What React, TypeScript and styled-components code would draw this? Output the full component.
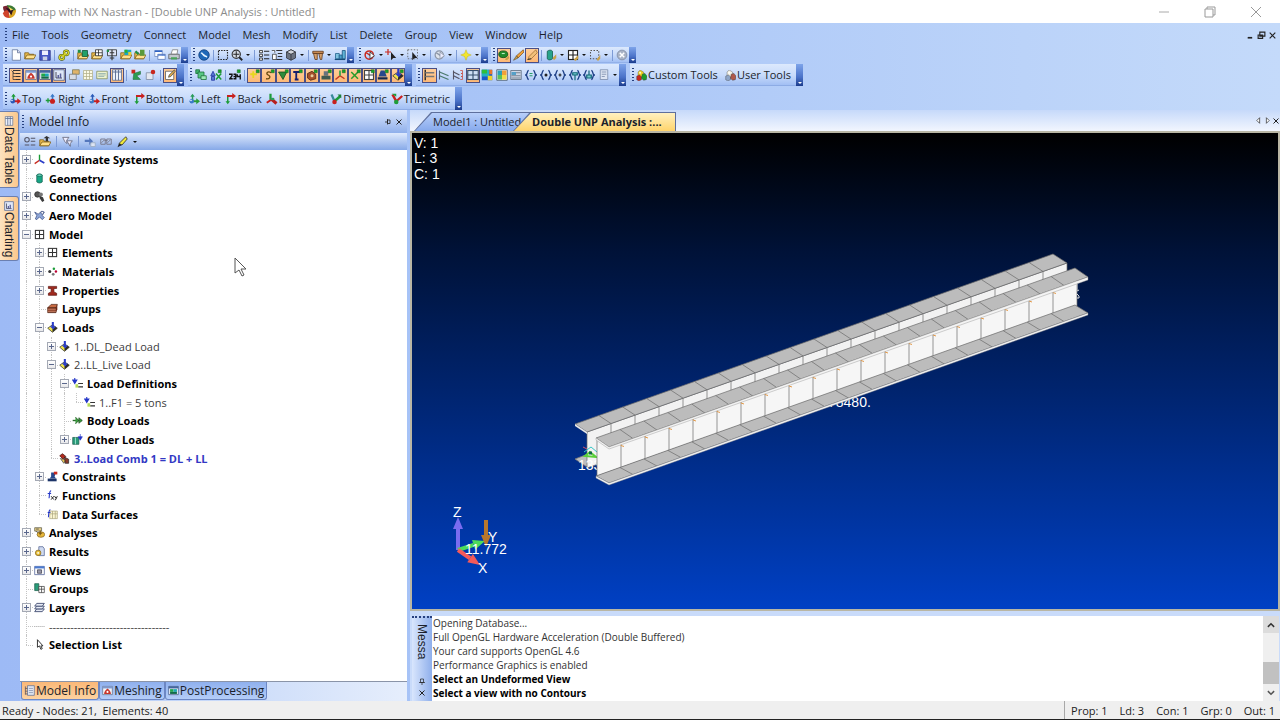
import React from 'react';
import styled, { createGlobalStyle, css } from 'styled-components';

const GlobalStyle = createGlobalStyle`
  *, *::before, *::after { box-sizing: border-box; }
  body { margin: 0; font-family: "Open Sans", "Noto Sans", sans-serif; font-size: 12px; color: #1b1f2b; }
  button { font: inherit; color: inherit; border: 0; margin: 0; padding: 0; background: none; }
  ul { list-style: none; margin: 0; padding: 0; }
  p { margin: 0; }
  svg { display: block; flex: none; }
`;

/* ---------- icon drawings, all on a 16 x 16 grid ---------- */

const grid = (c: string, f = '#fff') => (
  <>
    <rect x="2" y="2" width="12" height="12" fill={f} stroke={c} strokeWidth="1.5" />
    <path d="M8 2v12M2 8h12" stroke={c} strokeWidth="1.5" />
  </>
);
const tick = <path d="M11 1h4v4h-4z" fill="#18a52a" stroke="#0c5c16" strokeWidth=".6" />;
const folder = (
  <>
    <path d="M1 13V5h5l1 2h6v6z" fill="#e8b94c" stroke="#7a5a14" />
    <path d="M1 13l3-5h12l-3 5z" fill="#ffe08a" stroke="#7a5a14" />
  </>
);
const load = (
  <>
    <path d="M1 9l7-5 7 5-7 6z" fill="#f0e34a" stroke="#2a2a2a" strokeWidth="1" />
    <path d="M8 15l7-6-3-2-4 4z" fill="#2a2a2a" />
    <path d="M7 0h3v6h3l-4 5-5-5h3z" fill="#2a3cc8" />
  </>
);
const braces = (inner: React.ReactNode) => (
  <>
    <path d="M5 2C2 2 4 7 1 8c3 1 1 6 4 6M11 2c3 0 1 5 4 6-3 1-1 6-4 6" fill="none" stroke="#1d3f86" strokeWidth="1.8" />
    {inner}
  </>
);
const axes = (a: string, b: string, c: string) => (
  <>
    <path d="M6 10V3" stroke={a} strokeWidth="2" />
    <path d="M3 5l3-4 3 4z" fill={a} />
    <path d="M6 11h6" stroke={b} strokeWidth="2.6" />
    <path d="M11 7l5 4-5 4z" fill={b} />
    <circle cx="5" cy="11" r="3" fill={c} />
    <circle cx="4" cy="10" r="1" fill="#fff" />
  </>
);
const cubes = (a: string, b: string, c: string) => (
  <>
    <path d="M6 0l5 3v6l-5 3-3-4V3z" fill={a} stroke="#555" strokeWidth=".6" />
    <path d="M1 9l4-2 3 3v4l-4 2-3-2z" fill={b} stroke="#444" strokeWidth=".6" />
    <path d="M9 6l4-1 3 4-1 5-4 1-3-3z" fill={c} stroke="#333" strokeWidth=".6" />
    <circle cx="6" cy="4" r="1.5" fill="#fff" opacity=".8" />
  </>
);

const art: Record<string, React.ReactNode> = {
  app: (
    <>
      <path d="M1 3c4-2 7-1 8 2l-3 6C3 10 1 7 1 3z" fill="#7a2432" />
      <path d="M5 1c6 0 10 3 10 7L9 8z" fill="#3c7a35" />
      <path d="M15 6c0 5-3 9-8 9l2-7z" fill="#d9a522" />
      <path d="M1 10c1-3 4-4 6-3l1 8c-4 0-6-2-7-5z" fill="#d0442b" />
      <path d="M4 4l6 8 2-6z" fill="#2e1320" />
      <path d="M7 3l2 4 3-1z" fill="#f5d95a" />
    </>
  ),
  doc: (
    <>
      <path d="M3 1h7l4 4v10H3z" fill="#fff" stroke="#5b6f96" />
      <path d="M10 1v4h4" fill="#dde" stroke="#5b6f96" />
    </>
  ),
  folder,
  save: (
    <>
      <path d="M1 2h14v13H1z" fill="#4756c4" stroke="#283080" />
      <path d="M4 2h8v6H4z" fill="#eef" />
      <path d="M5 10h6v5H5z" fill="#c9cfe8" />
    </>
  ),
  link: (
    <g fill="none" strokeWidth="3">
      <g stroke="#4d5a08">
        <circle cx="5" cy="11" r="3" />
        <circle cx="11" cy="5" r="3" />
      </g>
      <g stroke="#d8d62a" strokeWidth="1.6">
        <circle cx="5" cy="11" r="3" />
        <circle cx="11" cy="5" r="3" />
        <path d="M5 11l6-6" />
      </g>
    </g>
  ),
  folderGeom: <>{folder}<path d="M1 1h4v4H1z" fill="#1e8f46" /><path d="M7 2h7v8H7z" fill="#21a06a" stroke="#0c4f33" /></>,
  folderGrid: <>{folder}<path d="M6 1h9v8H6z" fill="#fff" stroke="#222" /><path d="M10 1v8M6 5h9" stroke="#222" /></>,
  folderAna: <><path d="M2 1h12v8H2z" fill="#dfe6f6" stroke="#222" /><path d="M8 1v14M5 5h6M5 12h6" stroke="#333" strokeWidth="1.5" /><path d="M1 1h3v3H1z" fill="#1e8f46" /></>,
  folderRes: <>{folder}<path d="M6 1h9v7H6z" fill="#1aa4c8" /><path d="M6 1h4v4H6z" fill="#2cb22c" /><path d="M11 4h4v4h-4z" fill="#e8d02a" /></>,
  folderGo: <>{folder}<path d="M8 1h6v8H8z" fill="#5a9a3c" /><path d="M2 3l4 4" stroke="#1e8f46" strokeWidth="3" /></>,
  windows: <><path d="M1 2h10v8H1z" fill="#fff" stroke="#6b86bd" /><path d="M1 2h10v2H1zM5 7h10v2H5z" fill="#2d62c4" /><path d="M5 7h10v7H5z" fill="none" stroke="#6b86bd" /><path d="M6 9h8v4H6z" fill="#fff" /></>,
  print: <><path d="M4 7l2-6h7l-1 6z" fill="#fff" stroke="#777" /><path d="M1 7h14v6H1z" fill="#c3c8cf" stroke="#555" /><path d="M4 11h8v3H4z" fill="#4aa35a" /></>,
  globe: <><circle cx="8" cy="8" r="7" fill="#1f68b8" stroke="#0d3c7c" /><path d="M4 5l8 6M5 5c2 4 4 5 7 5" stroke="#e6f3ff" strokeWidth="2" fill="none" /></>,
  marquee: <rect x="2" y="2" width="12" height="12" fill="none" stroke="#222" strokeWidth="1.5" strokeDasharray="2 1.5" />,
  zoom: <><circle cx="7" cy="7" r="5.5" fill="#d5dae2" stroke="#333" strokeWidth="1.5" /><path d="M7 3v8M3 7h8" stroke="#222" strokeWidth="1.3" /><path d="M11 11l4 4" stroke="#222" strokeWidth="2.4" /></>,
  list: <><path d="M2 2h4v3H2zM2 7h4v3H2zM2 12h4v3H2z" fill="#eee" stroke="#222" /><path d="M8 3h7M8 8h7M8 13h7" stroke="#222" strokeWidth="1.5" /></>,
  listUp: <><path d="M7 2h8M9 6h6M9 10h6M7 14h8" stroke="#333" strokeWidth="1.5" /><path d="M2 7h5v7H2zM1 2h4v3" fill="#fff" stroke="#333" /></>,
  cube: <><path d="M8 1l6 3v8l-6 3-6-3V4z" fill="#6c737f" stroke="#2b2f36" /><path d="M8 7l6-3-6-3-6 3z" fill="#d2d5da" stroke="#2b2f36" /><path d="M8 7v8" stroke="#2b2f36" /></>,
  boxes: <><path d="M1 3h14v3H1z" fill="#c88a52" stroke="#5a3316" /><path d="M2 6h5v8H4zM9 6h5l-1 8h-2z" fill="#d6a06a" stroke="#5a3316" /></>,
  viewmove: <><path d="M2 6h5v7H2z" fill="#7fc3e0" stroke="#1e5d88" /><path d="M7 8h4v5H7z" fill="#4aa0cc" stroke="#1e5d88" /><path d="M11 2h4v11h-4z" fill="#5fb3d6" stroke="#174c78" /><path d="M1 14h14" stroke="#174c78" strokeWidth="1.5" /></>,
  pickNo: <><circle cx="7" cy="8" r="5.5" fill="none" stroke="#c8281e" strokeWidth="2" /><path d="M3 5l9 6" stroke="#c8281e" strokeWidth="2" /><path d="M8 4v9l6-4z" fill="#fff" stroke="#222" /></>,
  pickAdd: <><path d="M4 0v8M0 4h8" stroke="#c8281e" strokeWidth="1.6" /><path d="M8 4v11l3-3h4z" fill="#222" /></>,
  pickBox: <><path d="M1 1h13v12H1z" fill="none" stroke="#555" strokeDasharray="2 2" /><path d="M7 4v11l3-3h4z" fill="#222" /></>,
  nope: <><circle cx="7" cy="8" r="5.5" fill="#dfe4ec" stroke="#8a94a6" strokeWidth="1.6" /><path d="M3 5l9 6" stroke="#8a94a6" strokeWidth="2" /><path d="M8 4v9l6-4z" fill="#eef" stroke="#8a94a6" /></>,
  spark: <path d="M8 1l2 5 5 2-5 2-2 5-2-5-5-2 5-2z" fill="#f2e52e" stroke="#b8a800" strokeWidth=".5" />,
  hide: <><ellipse cx="7" cy="7" rx="6" ry="4.5" fill="#1f8b2c" stroke="#0a4712" /><path d="M5 6h4" stroke="#bfe8c4" strokeWidth="1.5" /><path d="M9 14l5-5 1 3-3 3z" fill="#caa24a" /></>,
  brush: <><path d="M15 1L6 9l2 3 8-8z" fill="#f1a13a" stroke="#6a3c0a" strokeWidth=".8" /><path d="M6 9l-4 6 6-3z" fill="#caa24a" stroke="#5a4a2a" strokeWidth=".8" /></>,
  eraser: <><path d="M13 1l2 4-8 8-4 1 1-4z" fill="#f2c07a" stroke="#86541a" strokeWidth=".8" /><path d="M2 14l5-1" stroke="#333" strokeWidth="1.5" /></>,
  cylBrush: <><path d="M3 3c2-2 6-2 7 0v10c-2 2-6 2-7 0z" fill="#27a38b" stroke="#0f5647" /><path d="M10 12l5-5v5l-3 3z" fill="#caa24a" /></>,
  gridBrush: <>{grid('#222')}<path d="M9 14l6-6v5l-4 3z" fill="#caa24a" /></>,
  boxBrush: <><path d="M2 2h11v11H2z" fill="none" stroke="#555" strokeDasharray="2 2" strokeWidth="1.4" /><path d="M10 14l5-6v5l-3 3z" fill="#caa24a" /></>,
  stop: <><circle cx="8" cy="8" r="6.5" fill="#a9b3c6" stroke="#7c88a0" /><path d="M5 5l6 6M11 5l-6 6" stroke="#fff" strokeWidth="2" /></>,
  tree: <><path d="M4 2h10M7 6h7M7 10h7M7 14h7" stroke="#333" strokeWidth="1.6" /><path d="M2 2l3 3M4 3v11M4 10h3M4 14h3M4 6h3" stroke="#333" fill="none" /></>,
  mesh: <><path d="M1 2h14v12H1z" fill="#f3f5fa" stroke="#5b6780" /><path d="M1 2h14v3H1z" fill="#7f9ad0" /><path d="M3 13c0-3 2-6 5-8 3 2 5 5 5 8z" fill="#c8372c" /><circle cx="8" cy="10" r="1.5" fill="#fff" /></>,
  post: <><path d="M1 2h14v12H1z" fill="#f3f5fa" stroke="#38507c" /><path d="M1 2h14v3H1z" fill="#44659f" /><path d="M3 6h5v4H3z" fill="#21a54a" /><path d="M8 6h5v4H8z" fill="#1aa8b4" /><path d="M3 10h10v3H3z" fill="#126b4a" /></>,
  chart: <><path d="M1 1h14v14H1z" fill="#dfe7f7" stroke="#36558e" /><path d="M4 4v8h8" stroke="#223" fill="none" /><path d="M6 8h2v4H6zM9 6h2v6H9z" fill="#5a5f9a" /></>,
  edit: <><path d="M6 1h9v6H6z" fill="#e0b46a" stroke="#775" /><path d="M2 7h9v7H2z" fill="#d7dce6" stroke="#777" /></>,
  table: <><path d="M2 2h12v12H2z" fill="#fbfae6" stroke="#b3b08a" /><path d="M2 6h12M2 10h12M6 2v12M10 2v12" stroke="#b3b08a" /></>,
  entity: <><path d="M1 3h14v10H1z" fill="#eef3cf" stroke="#7c8a58" /><path d="M3 6h10M3 8h10M3 10h8" stroke="#8aa" /></>,
  columns: <><path d="M2 1h12v14H2z" fill="#eef2fa" stroke="#56688c" /><path d="M2 4h12M6 1v14M10 1v14" stroke="#56688c" strokeWidth="1.2" /></>,
  info: <><path d="M5 1h10v14H5z" fill="#dfe5f0" stroke="#56688c" /><path d="M2 2v12M2 5h3M2 9h3M2 13h3" stroke="#445" /><path d="M7 5h6M7 8h6M7 11h6" stroke="#7a88a8" /></>,
  program: <><path d="M2 1h5v5H2z" fill="#c8281e" /><path d="M5 6l9-3v4l-5 2 5 5H4z" fill="#2b9c50" stroke="#145c2a" strokeWidth=".6" /></>,
  record: <><path d="M3 5h9v9H3z" fill="#e4e8f0" stroke="#7a869e" /><circle cx="12" cy="4" r="3" fill="#c8281e" /></>,
  note: <><path d="M2 3h11v11H2z" fill="#fff" stroke="#555" /><path d="M14 1L7 8l-1 3 3-1 6-7z" fill="#e8b04a" stroke="#444" /></>,
  layersG: <><path d="M1 1h5v5H1z" fill="#3fb56b" stroke="#166b34" /><path d="M4 4h8v8H4z" fill="#58c784" stroke="#166b34" /><path d="M8 9h7v5H8z" fill="#9de9b8" stroke="#166b34" /></>,
  excel: <><path d="M4 3l-3 6h6zM2 10h4v5H2z" fill="#5a78d8" stroke="#1b2f9c" /><path d="M8 6l7 8M15 6l-7 8" stroke="#1c9c3a" strokeWidth="2" />{tick}</>,
  num: <><path d="M0 7h4v2L1 13h4M6 7h3v3H6h3v3H6M11 7v3h4V7v7" fill="none" stroke="#111" strokeWidth="1.8" />{tick}</>,
  plus: <><path d="M7 3v9M3 7h9" stroke="#e8d81e" strokeWidth="2.4" />{tick}</>,
  curve: <><path d="M11 5C6 2 3 6 7 8s2 6-3 5" fill="none" stroke="#6a4b10" strokeWidth="1.8" />{tick}</>,
  surf: <><path d="M2 4h11l-5 10z" fill="#2e8b3a" stroke="#124a1a" />{tick}</>,
  text: <><path d="M3 4h9M7 4v10M5 14h5" stroke="#15206e" strokeWidth="2.4" />{tick}</>,
  solid: <><path d="M2 6l6-3 5 4v6l-7 2-4-3z" fill="#a4502a" stroke="#4a2410" /><circle cx="8" cy="9" r="2" fill="#e8d0a0" />{tick}</>,
  conn: <><path d="M5 3h6v6H5z" fill="#68737f" /><path d="M2 9h12v5H2z" fill="#3f5a52" />{tick}</>,
  csys: <><path d="M8 9l-6 5M8 9l6 4" fill="none" stroke="#c33a22" strokeWidth="2" /><path d="M8 2v7" stroke="#189c3a" strokeWidth="2" />{tick}</>,
  node: <><path d="M3 4l9 9M12 4l-9 9" stroke="#2c9c2c" strokeWidth="2" />{tick}</>,
  elem: <>{grid('#444')}{tick}</>,
  cons: <><path d="M5 2h5l3 8H2z" fill="#27488c" /><path d="M1 11h13v3H1z" fill="#13264e" />{tick}</>,
  loadG: <>{load}{tick}</>,
  beam: <><path d="M3 1v14" stroke="#333" strokeWidth="2" /><path d="M3 5h12M3 10h12" stroke="#777" strokeWidth="2" /></>,
  beamDef: <><path d="M2 2v12" stroke="#556" strokeWidth="1.5" /><path d="M2 4l12 5M2 9l12 5" stroke="#4b7a6c" strokeWidth="1.8" /></>,
  beamAnim: <><path d="M2 2v12" stroke="#556" strokeWidth="1.5" /><path d="M2 4l8 4M2 9l8 4" stroke="#556" strokeWidth="1.8" /><path d="M11 2h3v4h-2 2v4h-2 2v4h-3" stroke="#c8483e" fill="none" /></>,
  meshGrid: <><rect x="1" y="2" width="14" height="12" fill="#cfe0f5" stroke="#36506e" strokeWidth="1.5" /><path d="M1 8h14M8 2v12" stroke="#36506e" strokeWidth="1.5" /></>,
  contour: <><path d="M1 1h14v14H1z" fill="#1a5ac8" /><path d="M1 1h10v9H1z" fill="#25b0c0" /><path d="M1 1h7v5H1z" fill="#2fbf3a" /><path d="M9 9h6v6H9z" fill="#f0d22a" /><path d="M11 1h4v6h-4z" fill="#e8782a" /></>,
  criteria: <><path d="M1 1h14v14H1z" fill="#fff" stroke="#345" /><path d="M2 2h6v6H2z" fill="#2aa0b8" /><path d="M8 2h6v6H8z" fill="#f0a03a" /><path d="M2 8h6v6H2z" fill="#58c05a" /><path d="M8 8h6v6H8z" fill="#f0dc4a" /></>,
  beamDia: <><path d="M1 2h14v12H1z" fill="#cfd7e6" stroke="#567" /><path d="M2 4h6v4H2z" fill="#55a0c8" /><path d="M2 9h12M8 5h6M2 12h12" stroke="#567" /></>,
  br1: braces(<path d="M6 6h4M6 9h4" stroke="#2aa06a" strokeWidth="1.6" />),
  br2: braces(<circle cx="8" cy="8" r="2" fill="#222" />),
  br3: braces(<path d="M6 8h4M8 6v4" stroke="#222" strokeWidth="1.6" />),
  br4: braces(<path d="M5 5h6v3H5zM8 8v7" stroke="#167" strokeWidth="1.6" fill="#7cc" />),
  br5: braces(<path d="M5 8h6v4H5zM8 2v6" stroke="#167" strokeWidth="1.6" fill="#7cc" />),
  page: <><path d="M3 1h10v13H3z" fill="#dce4f2" stroke="#7485a6" /><path d="M5 4h6M5 7h6M5 10h4" stroke="#7485a6" /></>,
  custom: cubes('#f0d21e', '#c8281e', '#1f9c2c'),
  user: cubes('#f2f0e4', '#8fa6c8', '#b05a4a'),
  axA: axes('#1e9c3a', '#c8201e', '#2a5ab8'),
  axB: <><path d="M1 10h6M4 7v6" stroke="#1e9c3a" strokeWidth="1.8" /><path d="M10 9V3" stroke="#3a7ac8" strokeWidth="2.2" /><path d="M7 5l3-4 3 4z" fill="#3a7ac8" /><circle cx="10" cy="11" r="3.4" fill="#c8201e" /></>,
  axC: axes('#2a5ab8', '#c8201e', '#3a7ac8'),
  axD: <><path d="M5 3v10" stroke="#1e9c3a" strokeWidth="2" /><path d="M2 11l3 4 3-4z" fill="#1e9c3a" /><path d="M4 4h8" stroke="#c8201e" strokeWidth="2.6" /><path d="M11 0l5 4-5 4z" fill="#c8201e" /></>,
  axE: axes('#2a9c5a', '#2a9c3a', '#3a7ac8'),
  iso: <><path d="M6 9V1" stroke="#1e9c3a" strokeWidth="3" /><path d="M7 9l-6 4" stroke="#c8201e" strokeWidth="2.6" /><path d="M7 8l7 6" stroke="#b81e1e" strokeWidth="4" /><path d="M6 8h5" stroke="#2a9c5a" strokeWidth="3" /></>,
  dim: <><path d="M2 2l4 9" stroke="#3a8a9a" strokeWidth="3" /><path d="M6 11l8-7" stroke="#1e9c3a" strokeWidth="3.4" /><circle cx="6" cy="12" r="3" fill="#c8201e" /><path d="M10 2h5v5z" fill="#1e7c3a" /></>,
  tri: <><path d="M2 2l5 9" stroke="#c8201e" strokeWidth="3.4" /><path d="M7 11l8-7" stroke="#c8201e" strokeWidth="3" /><circle cx="7" cy="12" r="3" fill="#1e9c3a" /><path d="M1 1h6v4z" fill="#1e9c3a" /></>,
  listGray: <><circle cx="4" cy="5" r="3" fill="none" stroke="#556" strokeWidth="1.4" /><path d="M9 3h6M9 7h6M1 12h6M9 12h6" stroke="#556" strokeWidth="1.5" /></>,
  folderUp: <>{folder}<path d="M9 7V3H6l4-3 5 3h-3v4z" fill="#333" /></>,
  filter: <><path d="M1 2h9l-3 4v5L4 8z" fill="#eef" stroke="#556" /><path d="M7 7h8l-3 4v4l-2-3z" fill="#eef" stroke="#556" /></>,
  arrowBox: <><path d="M1 5h6V2l5 5-5 5V8H1z" fill="#5477bd" /><path d="M9 9h6v5H9z" fill="#dde5f4" stroke="#9ab" /></>,
  tags: <path d="M1 4h6v7H1zM9 4h6v7H9zM2 9l4-4M10 9l4-4M6 6h4" fill="none" stroke="#778" strokeWidth="1.2" />,
  marker: <><path d="M13 1l2 3-7 8-4-2z" fill="#f2ea3a" stroke="#222" /><path d="M4 10l4 2-6 3z" fill="#222" /></>,
  tCsys: <><path d="M8 1v8" stroke="#1a9c34" strokeWidth="2" /><path d="M8 9l-7 5" stroke="#c82a1e" strokeWidth="2" /><path d="M8 9l7 4" stroke="#2a3cc8" strokeWidth="2.4" /></>,
  tGeom: <><path d="M4 3c2-2 6-2 8 0v10c-2 2-6 2-8 0z" fill="#17a585" stroke="#0e5a4a" /><ellipse cx="8" cy="3.2" rx="4" ry="1.6" fill="#74e2c8" stroke="#0e5a4a" /></>,
  tConn: <><circle cx="5" cy="5" r="4" fill="#555" stroke="#222" /><circle cx="10" cy="5" r="3" fill="#777" /><path d="M8 7l5 2 2 5-3 2-4-6z" fill="#3a3a3a" /></>,
  tAero: <><path d="M1 3l5 3 5-4 4 1-3 5 3 3-3 3-4-4-4 4-2-1 2-5z" fill="#8ea6d8" stroke="#34477c" /><circle cx="12" cy="4" r="2" fill="#fff" stroke="#34477c" /></>,
  tGrid: grid('#333'),
  tMat: <><circle cx="4" cy="8" r="2.2" fill="#333" /><circle cx="10" cy="4" r="1.8" fill="#1c9c3a" /><circle cx="13" cy="8" r="1.8" fill="#b03" /><circle cx="9" cy="12" r="2" fill="#777" /></>,
  tProp: <path d="M2 2h12v3h-4v5l4 2v3H2v-3l4-2V5H2z" fill="#a02a1e" stroke="#5a120c" />,
  tLayup: <><path d="M1 7l5-5h9l-2 5z" fill="#c86a42" stroke="#4a1c0c" /><path d="M1 7h12v7H1z" fill="#8a3a22" stroke="#4a1c0c" /><path d="M1 9h12M1 12h12" stroke="#e8a88a" /><path d="M13 7l2-5v7l-2 5z" fill="#6a2412" /></>,
  load,
  tDef: <><path d="M4 0v7M1 3l3 5 3-5z" stroke="#2436c8" strokeWidth="1.6" fill="#2436c8" /><path d="M9 8h7M9 13h7" stroke="#333" strokeWidth="1.8" /><path d="M5 9h4v5H5z" fill="#b8dc5a" /></>,
  tBody: <><path d="M1 8h13" stroke="#2a6a2c" strokeWidth="2" /><path d="M5 3l5 5-5 5M10 4l5 4-5 4z" fill="#3c9c3e" stroke="#1c4a1e" /></>,
  tOther: <><path d="M1 5h9v10H1z" fill="#2a9c7a" stroke="#1c5a4a" /><path d="M5 5v10" stroke="#cfe" /><path d="M12 0v6M9 4l3 5 3-5z" stroke="#2436c8" fill="#2436c8" /></>,
  tComb: <><path d="M1 4l4-3 5 4-4 4z" fill="#b02a1e" stroke="#3a0c08" /><path d="M2 8l5 7 3-5z" fill="#e8c85a" stroke="#444" /><path d="M8 6l6 3v6H9z" fill="#8a3a2a" stroke="#222" /></>,
  tCons: <><path d="M6 2h6v3l-1 3 2 3H4l2-3z" fill="#27488c" /><path d="M1 11h13v4H1z" fill="#1c3468" /><path d="M10 1h5v4h-5z" fill="#c82a1e" /></>,
  tFun: <><path d="M6 1C3 1 4 5 3 12M1 5h5" stroke="#2436c8" fill="none" strokeWidth="1.6" /><path d="M6 9l4 5M10 9l-4 5M11 9l2 3M15 9l-3 6" stroke="#222" strokeWidth="1.4" /></>,
  tData: <><path d="M4 3h11v11H4z" fill="#fbf6d2" stroke="#a8a27a" /><path d="M4 7h11M8 3v11M12 3v11" stroke="#a8a27a" /><path d="M5 1C2 1 3 5 2 12M1 5h4" stroke="#2436c8" fill="none" strokeWidth="1.5" /></>,
  tAna: <><path d="M1 1h10v5H1z" fill="#e8d088" stroke="#554" /><path d="M3 3h4M3 6l3 3" stroke="#333" /><ellipse cx="10" cy="11" rx="5.5" ry="4" fill="#e8b83a" stroke="#7a5a14" /><path d="M9 5v7M7 9h5" stroke="#6a4a14" strokeWidth="1.4" /></>,
  tRes: <><path d="M7 1h6l2 3v10H7z" fill="#cfdaf0" stroke="#46598a" /><circle cx="6" cy="10" r="4" fill="#e8c03a" stroke="#7a5a14" /><circle cx="6" cy="10" r="1.3" fill="#fff" /></>,
  tView: <><path d="M1 2h14v12H1z" fill="#fff" stroke="#3a4f8a" /><path d="M1 2h14v3H1z" fill="#4a7ad0" /><path d="M5 7h6v5H5z" fill="#99a" stroke="#334" /></>,
  tGroup: <><path d="M1 1h6v10H1z" fill="#2a9c7a" stroke="#145a44" /><path d="M7 5h8v9H7z" fill="#fff" stroke="#333" /><path d="M11 5v9M7 9h8" stroke="#333" /></>,
  tLayer: <g fill="#e8ecf6" stroke="#333f66" strokeWidth="1.2"><path d="M1 14l3-4h11l-3 4z" /><path d="M1 10l3-4h11l-3 4z" /><path d="M1 6l3-4h11l-3 4z" /></g>,
  tCursor: <path d="M5 1v11l3-2 2 5 2-1-2-4h3z" fill="#fff" stroke="#222" strokeWidth="1.3" />,
  tDash: <path d="M0 8h16" stroke="#999" strokeDasharray="2 1" />,
  pin: <path d="M4 4h7v5H4zM2 9h11M8 9v5" fill="none" stroke="#222" strokeWidth="1.6" transform="rotate(90 8 8)" />,
  pinDown: <path d="M5 2h6v7H5zM2 9h12M8 9v5" fill="none" stroke="#222" strokeWidth="1.4" />,
  close: <path d="M3 3l10 10M13 3L3 13" stroke="#222" strokeWidth="2" />,
  mdiMin: <path d="M3 12h8" stroke="#222" strokeWidth="3" />,
  mdiMax: <path d="M5 2h9v7H5zM2 7h8v6H2z" fill="none" stroke="#222" strokeWidth="2" />,
  triL: <path d="M10 3v10L5 8z" fill="#fff" stroke="#222" strokeWidth="1.2" />,
  triR: <path d="M6 3v10l5-5z" fill="#fff" stroke="#222" strokeWidth="1.2" />,
  winMin: <path d="M3 8h10" stroke="#aaa" />,
  winMax: <path d="M3 5h8v8H3zM5 5V3h8v8h-2" fill="none" stroke="#999" />,
  winClose: <path d="M3 3l10 10M13 3L3 13" stroke="#999" />,
  up: <path d="M3 11l5-5 5 5" fill="none" stroke="#333" strokeWidth="2.4" />,
  down: <path d="M3 5l5 5 5-5" fill="none" stroke="#555" strokeWidth="2.4" />,
};

const Icon = ({ name, size = 13 }: { name: string; size?: number }) => (
  <svg width={size} height={size} viewBox="0 0 16 16" aria-hidden="true">{art[name]}</svg>
);

/* ---------- frame ---------- */

const Frame = styled.div`
  min-height: 100vh;
  display: flex;
  flex-direction: column;
  background: linear-gradient(90deg, #9dbaf5 0%, #a9c5f7 40%, #c4dafa 100%);
`;
const TitleBar = styled.header`
  height: 23px;
  display: flex;
  align-items: center;
  gap: 4px;
  padding-left: 2px;
  background: #fff;
  color: #8b8b8b;
`;
const Title = styled.h1`
  flex: 1;
  margin: 0;
  font-size: 11px;
  font-weight: 400;
`;
const WindowButtons = styled.div`
  display: flex;
  gap: 30px;
  padding-right: 16px;
`;
const PlainButton = styled.button`
  display: flex;
  align-items: center;
  justify-content: center;
`;
const MenuBar = styled.nav`
  height: 24px;
  display: flex;
  align-items: center;
  gap: 2px;
  padding: 0 3px;
`;
const MenuItems = styled.div`
  flex: 1;
  display: flex;
  gap: 12px;
  padding-left: 1px;
`;
const MenuItem = styled.button`
  font-size: 11px;
  line-height: 16px;
`;
const Grip = styled.span`
  flex: none;
  width: 2px;
  height: 14px;
  margin: 0 2px;
  background: repeating-linear-gradient(180deg, #27407e 0 1px, transparent 1px 3px);
`;

/* ---------- tool bars ---------- */

const Bands = styled.div`
  display: flex;
  flex-direction: column;
  gap: 1px;
  height: 63px;
`;
const Band = styled.div<{ $h: number; $gap: number }>`
  height: ${p => p.$h}px;
  display: flex;
  gap: ${p => p.$gap}px;
  padding-left: 3px;
`;
const Bar = styled.div<{ $w?: number }>`
  ${p => p.$w && css`width: ${p.$w}px;`}
  display: flex;
  align-items: center;
  background: linear-gradient(180deg, #dce9fd 0%, #c8dbfb 50%, #a3c0f4 94%, #809fdc 100%);
`;
const Cells = styled.div`
  flex: 1;
  align-self: stretch;
  display: flex;
  align-items: center;
`;
const Tool = styled.button<{ $on?: boolean }>`
  flex: 1;
  height: 15px;
  min-width: 0;
  display: flex;
  align-items: center;
  justify-content: center;
  ${p => p.$on && css`
    background: linear-gradient(180deg, #ffcf9a, #fdb774);
    box-shadow: inset 0 0 0 1px #4a4f86;
  `}
`;
const TextTool = styled.button`
  display: flex;
  align-items: center;
  gap: 1px;
  font-size: 11px;
  line-height: 16px;
  white-space: nowrap;
`;
const TextCells = styled(Cells)`
  justify-content: space-between;
  padding-right: 5px;
`;
const Drop = styled.span`
  flex: none;
  width: 8px;
  display: flex;
  justify-content: center;
  &::after { content: ""; border: 2px solid transparent; border-top-color: #111; margin-top: 2px; }
`;
const Split = styled.span`
  flex: none;
  width: 1px;
  height: 11px;
  margin: 0 2px;
  background: #7d9bd6;
`;
const Overflow = styled.button`
  flex: none;
  align-self: stretch;
  width: 7px;
  display: flex;
  align-items: flex-end;
  justify-content: center;
  padding-bottom: 2px;
  background: linear-gradient(180deg, #7ea4ea, #4a72c8 60%, #1c3c8c);
  &::after { content: ""; border: 2px solid transparent; border-top-color: #fff; border-bottom: 0; }
`;

type Group = { w: number; label: string; cells: string };
/* cell codes: "*" marks a pressed tool, "v" a drop-down arrow, "|" a divider */
const fileBand: Group[] = [
  { w: 185, label: 'File', cells: 'doc folder save | link | folderGeom folderGrid folderAna folderRes folderGo | windows print' },
  { w: 163, label: 'View', cells: 'globe | marquee zoom v | list listUp cube v | boxes v viewmove' },
  { w: 131, label: 'Select', cells: 'pickNo v pickAdd v pickBox v | nope v | spark v' },
  { w: 145, label: 'Show', cells: '*hide brush *eraser | cylBrush v gridBrush v boxBrush v | stop' },
];
const paneBand: Group[] = [
  { w: 181, label: 'Panes', cells: '*tree *mesh *post *chart edit table entity *columns | program record | *note' },
  { w: 224, label: 'Entities', cells: 'layersG excel | num | *plus *curve *surf *text *solid *conn *csys *node *elem *cons *loadG' },
  { w: 210, label: 'Post', cells: '*beam beamDef beamAnim *meshGrid contour criteria beamDia br1 br2 br3 br4 br5 page v' },
];
const viewTools: [string, string][] = [
  ['axA', 'Top'], ['axB', 'Right'], ['axC', 'Front'], ['axD', 'Bottom'], ['axE', 'Left'],
  ['axD', 'Back'], ['iso', 'Isometric'], ['dim', 'Dimetric'], ['tri', 'Trimetric'],
];

const ToolGroup = ({ w, label, cells }: Group) => (
  <Bar $w={w} role="toolbar" aria-label={label}>
    <Grip />
    <Cells>
      {cells.split(' ').map((c, i) => {
        if (c === '|') return <Split key={i} />;
        if (c === 'v') return <Drop key={i} />;
        const on = c[0] === '*';
        const name = on ? c.slice(1) : c;
        return <Tool key={i} $on={on} aria-label={name}><Icon name={name} size={12} /></Tool>;
      })}
    </Cells>
    <Overflow aria-label="More" />
  </Bar>
);

/* ---------- work area ---------- */

const Work = styled.div`
  flex: 1;
  display: flex;
  min-height: 0;
`;
const Rail = styled.div`
  width: 20px;
  display: flex;
  flex-direction: column;
  gap: 8px;
  padding-top: 1px;
`;
const RailTab = styled.button<{ $h: number }>`
  width: 19px;
  height: ${p => p.$h}px;
  display: flex;
  flex-direction: column;
  align-items: center;
  gap: 1px;
  padding-top: 4px;
  border: 1px solid #6b7fb0;
  border-left: 0;
  border-radius: 0 3px 3px 0;
  background: linear-gradient(90deg, #fde3bf, #fbc78c);
  font-family: "Liberation Sans", Arial, sans-serif;
  font-size: 12px;
  line-height: 16px;
`;
const Vertical = styled.span`
  writing-mode: vertical-rl;
`;
const Panel = styled.section`
  width: 387px;
  display: flex;
  flex-direction: column;
  background: #fff;
`;
const PanelHead = styled.div`
  height: 23px;
  display: flex;
  align-items: center;
  gap: 3px;
  padding-right: 4px;
  background: linear-gradient(180deg, #dbe7fd, #8fafeb);
`;
const PanelTitle = styled.h2`
  flex: 1;
  margin: 0;
  font-size: 12px;
  font-weight: 400;
`;
const PanelTools = styled.div`
  height: 17px;
  display: flex;
  align-items: center;
  gap: 3px;
  padding: 0 4px;
  background: linear-gradient(180deg, #dfeafd, #86a9e8);
`;
const ToolIcons = styled.div`
  display: flex;
  align-items: center;
  gap: 4px;
`;
const Tree = styled.ul`
  flex: none;
  height: 504px;
  display: flex;
  flex-direction: column;
`;
const TreeRow = styled.li`
  flex: 1;
  min-height: 0;
  display: flex;
  align-items: stretch;
`;
const Guide = styled.span<{ $w: number; $line: 'none' | 'full' | 'half'; $arm?: boolean }>`
  position: relative;
  flex: none;
  width: ${p => p.$w}px;
  display: flex;
  align-items: center;
  justify-content: center;
  &::before {
    content: "";
    position: absolute;
    left: 6px;
    top: 0;
    height: ${p => (p.$line === 'half' ? '50%' : '100%')};
    border-left: ${p => (p.$line === 'none' ? '0' : '1px dotted #c4c4c4')};
  }
  &::after {
    content: "";
    position: absolute;
    left: 6px;
    right: 0;
    top: 50%;
    border-top: ${p => (p.$arm ? '1px dotted #c4c4c4' : '0')};
  }
`;
const Toggle = styled.button<{ $open: boolean }>`
  position: relative;
  z-index: 1;
  width: 9px;
  height: 9px;
  border: 1px solid #a4a9b4;
  background:
    linear-gradient(#5a678c, #5a678c) center / 5px 1px no-repeat,
    ${p => (p.$open ? '' : 'linear-gradient(#5a678c, #5a678c) center / 1px 5px no-repeat,')}
    linear-gradient(#fff, #e8e8ea);
`;
const Node = styled.span<{ $tone: string }>`
  display: flex;
  align-items: center;
  gap: 4px;
  padding-left: 1px;
  white-space: nowrap;
  font-size: 11px;
  font-weight: ${p => (p.$tone === 'plain' ? 400 : 700)};
  color: ${p => (p.$tone === 'blue' ? '#3238c4' : p.$tone === 'plain' ? '#3c3c3c' : '#000')};
`;

type Item = { d: number; t: string; icon: string; tg?: '+' | '-'; tone?: string };
const items: Item[] = [
  { d: 0, t: 'Coordinate Systems', icon: 'tCsys', tg: '+' },
  { d: 0, t: 'Geometry', icon: 'tGeom' },
  { d: 0, t: 'Connections', icon: 'tConn', tg: '+' },
  { d: 0, t: 'Aero Model', icon: 'tAero', tg: '+' },
  { d: 0, t: 'Model', icon: 'tGrid', tg: '-' },
  { d: 1, t: 'Elements', icon: 'tGrid', tg: '+' },
  { d: 1, t: 'Materials', icon: 'tMat', tg: '+' },
  { d: 1, t: 'Properties', icon: 'tProp', tg: '+' },
  { d: 1, t: 'Layups', icon: 'tLayup' },
  { d: 1, t: 'Loads', icon: 'load', tg: '-' },
  { d: 2, t: '1..DL_Dead Load', icon: 'load', tg: '+', tone: 'plain' },
  { d: 2, t: '2..LL_Live Load', icon: 'load', tg: '-', tone: 'plain' },
  { d: 3, t: 'Load Definitions', icon: 'tDef', tg: '-' },
  { d: 4, t: '1..F1 = 5 tons', icon: 'tDef', tone: 'plain' },
  { d: 3, t: 'Body Loads', icon: 'tBody' },
  { d: 3, t: 'Other Loads', icon: 'tOther', tg: '+' },
  { d: 2, t: '3..Load Comb 1 = DL + LL', icon: 'tComb', tone: 'blue' },
  { d: 1, t: 'Constraints', icon: 'tCons', tg: '+' },
  { d: 1, t: 'Functions', icon: 'tFun' },
  { d: 1, t: 'Data Surfaces', icon: 'tData' },
  { d: 0, t: 'Analyses', icon: 'tAna', tg: '+' },
  { d: 0, t: 'Results', icon: 'tRes', tg: '+' },
  { d: 0, t: 'Views', icon: 'tView', tg: '+' },
  { d: 0, t: 'Groups', icon: 'tGroup' },
  { d: 0, t: 'Layers', icon: 'tLayer', tg: '+' },
  { d: 0, t: '----------------------------------', icon: 'tDash', tone: 'plain' },
  { d: 0, t: 'Selection List', icon: 'tCursor' },
];
const hasLaterSibling = (index: number, depth: number) => {
  for (let k = index + 1; k < items.length; k++) {
    if (items[k].d < depth) return false;
    if (items[k].d === depth) return true;
  }
  return false;
};
const guideWidths = [13, 12, 13, 12, 13];

const TreeView = () => (
  <Tree role="tree" aria-label="Model Info">
    {items.map((it, i) => (
      <TreeRow key={it.t} role="treeitem" aria-level={it.d + 1}>
        {guideWidths.slice(0, it.d).map((w, l) => (
          <Guide key={l} $w={w} $line={hasLaterSibling(i, l) ? 'full' : 'none'} />
        ))}
        <Guide $w={13} $arm $line={hasLaterSibling(i, it.d) ? 'full' : 'half'}>
          {it.tg && <Toggle $open={it.tg === '-'} aria-label={it.tg === '-' ? 'Collapse' : 'Expand'} />}
        </Guide>
        <Node $tone={it.tone ?? 'bold'}><Icon name={it.icon} size={11} />{it.t}</Node>
      </TreeRow>
    ))}
  </Tree>
);

const PanelTabs = styled.div`
  margin-top: auto;
  height: 20px;
  display: flex;
  align-items: flex-start;
  padding-left: 1px;
  border-top: 1px solid #8a94a8;
  background: linear-gradient(90deg, #a9c4f6, #e6eefc);
`;
const PanelTab = styled.button<{ $on?: boolean }>`
  height: 18px;
  display: flex;
  align-items: center;
  gap: 1px;
  padding: 0 2px;
  border: 1px solid #6c87c4;
  border-top: 0;
  border-radius: 0 0 3px 3px;
  background: ${p => (p.$on ? 'linear-gradient(180deg, #fbb877, #fdd2a0)' : 'linear-gradient(180deg, #8fb0ee, #b4cdf8)')};
  font-size: 12px;
  line-height: 16px;
`;

/* ---------- documents ---------- */

const Right = styled.main`
  flex: 1;
  min-width: 0;
  display: flex;
  flex-direction: column;
  margin-left: 3px;
  background: #c9dbfa;
`;
const DocTabs = styled.div`
  height: 21px;
  display: flex;
  align-items: flex-end;
  padding-left: 4px;
  background: linear-gradient(180deg, #c6d9fa, #f2f6fe);
`;
const DocTab = styled.button<{ $on?: boolean; $w: number }>`
  position: relative;
  isolation: isolate;
  width: ${p => p.$w}px;
  height: 19px;
  flex: none;
  padding-left: 19px;
  margin-right: -17px;
  font-size: 11px;
  text-align: left;
  white-space: nowrap;
  overflow: hidden;
  font-weight: ${p => (p.$on ? 700 : 400)};
  background: #5e6f9c;
  clip-path: polygon(0 100%, 17px 0, 100% 0, 100% 100%);
  z-index: ${p => (p.$on ? 1 : 0)};
  &::before {
    content: "";
    position: absolute;
    z-index: -1;
    inset: 1px 1px 0 1px;
    background: ${p => (p.$on ? 'linear-gradient(180deg, #fff1c0, #ffd46c)' : 'linear-gradient(180deg, #b8cffa, #86a9ec)')};
    clip-path: polygon(0 100%, 17px 0, 100% 0, 100% 100%);
  }
`;
const DocNav = styled.div`
  margin-left: auto;
  align-self: center;
  display: flex;
`;
const Viewport = styled.div`
  flex: 1;
  min-height: 0;
  display: flex;
  border: 2px solid #b9b6a4;
  background: linear-gradient(180deg, #000 0%, #001238 25%, #0040c4 100%);
`;
const Scene = styled.svg`
  flex: 1;
  width: 100%;
  height: 100%;
  font-family: "Liberation Sans", Arial, sans-serif;
  font-size: 14px;
  fill: #fff;
`;

const N = 20;
const steps = Array.from({ length: N - 1 }, (_, k) => (k + 1) / N);
type P = [number, number];
const at = (a: P, b: P, t: number): P => [a[0] + (b[0] - a[0]) * t, a[1] + (b[1] - a[1]) * t];
const pts = (...p: P[]) => p.map(q => q.join(',')).join(' ');

/* a strip between edges a-b and c-d, cut into N elements */
const Strip = ({ a, b, c, d, fill }: { a: P; b: P; c: P; d: P; fill: string }) => (
  <g stroke="#6a6a6a" strokeWidth="0.7">
    <polygon points={pts(a, b, d, c)} fill={fill} />
    {steps.map(t => {
      const p = at(a, b, t);
      const q = at(c, d, t);
      return <line key={t} x1={p[0]} y1={p[1]} x2={q[0]} y2={q[1]} />;
    })}
  </g>
);

const Arrow = ({ from, to, color }: { from: P; to: P; color: string }) => {
  const dx = to[0] - from[0];
  const dy = to[1] - from[1];
  const len = Math.hypot(dx, dy);
  const u: P = [dx / len, dy / len];
  const base: P = [to[0] - u[0] * 12, to[1] - u[1] * 12];
  return (
    <g>
      <line x1={from[0]} y1={from[1]} x2={base[0]} y2={base[1]} stroke={color} strokeWidth="4" />
      <polygon
        points={pts(to, [base[0] - u[1] * 5, base[1] + u[0] * 5], [base[0] + u[1] * 5, base[1] - u[0] * 5])}
        fill={color}
      />
    </g>
  );
};

const Model = () => (
  <Scene viewBox="412 133 866 476" preserveAspectRatio="xMinYMin meet" role="img" aria-label="Double UNP beam model">
    <text x="414" y="148">V: 1</text>
    <text x="414" y="163">L: 3</text>
    <text x="414" y="179">C: 1</text>
    <text x="828" y="407">78480.</text>

    <polygon points="575,459 588,454 598,460 587,467" fill="#bdbdbd" stroke="#777" strokeWidth="0.8" />
    <Strip a={[587, 432]} b={[1067, 263]} c={[587, 468]} d={[1067, 299]} fill="#f2f2f2" />
    <Strip a={[575, 424]} b={[1053, 254]} c={[587, 432]} d={[1067, 263]} fill="#bcbcbc" />
    <path d="M575 424v2l12 8v-2z" fill="#e8e8e8" />
    <text x="578" y="470">1333.</text>
    <g fill="none">
      <path d="M584 452l7-5 6 5" stroke="#35c8c8" />
      <path d="M585 456l5-4 6 5z" stroke="#5ad03a" strokeWidth="2" />
      <path d="M583 447l4 2" stroke="#d0506a" />
      <path d="M589 453h3" stroke="#164" strokeWidth="3" />
    </g>

    <Strip a={[597, 440]} b={[1077, 270]} c={[597, 476]} d={[1077, 306]} fill="#f6f6f6" />
    <g stroke="#e39a4a" fill="none">
      {steps.map((t, i) => {
        const p = at([597, 457], [1077, 287], t);
        return <path key={i} d={`M${p[0]} ${p[1] - 7}v4l3 1`} />;
      })}
    </g>
    <Strip a={[596, 476]} b={[1075, 305]} c={[609, 483]} d={[1088, 313]} fill="#bcbcbc" />
    <polygon points="596,476 609,483 1088,313 1088,315 609,485 596,478" fill="#f4f4f4" stroke="#8a8a8a" strokeWidth="0.4" />
    <Strip a={[596, 438]} b={[1075, 268]} c={[609, 447]} d={[1088, 277]} fill="#bcbcbc" />
    <polygon points="596,438 609,447 1088,277 1088,280 609,449 596,440" fill="#f4f4f4" stroke="#8a8a8a" strokeWidth="0.4" />
    <path d="M1077 284v6M1077 291l2-1M1077 294l2 2v2h-2" stroke="#ddd" fill="none" />

    <Arrow from={[458, 550]} to={[458, 517]} color="#7a6cf0" />
    <Arrow from={[458, 550]} to={[485, 541]} color="#4cdc5c" />
    <Arrow from={[458, 550]} to={[480, 565]} color="#f45a5a" />
    <Arrow from={[486, 520]} to={[486, 547]} color="#b8772c" />
    <text x="453" y="517">Z</text>
    <text x="488" y="542">Y</text>
    <text x="478" y="573">X</text>
    <text x="465" y="554">11.772</text>
  </Scene>
);

const Messages = styled.section`
  flex: none;
  height: 90px;
  display: flex;
  padding: 5px 1px 0 2px;
`;
const MessageHead = styled.div`
  width: 20px;
  display: flex;
  flex-direction: column;
  align-items: center;
  gap: 3px;
  padding: 1px 0 4px;
  border-top: 2px dotted #27407e;
  background: linear-gradient(90deg, #d9e6fd, #8fafeb);
  font-family: "Liberation Sans", Arial, sans-serif;
  font-size: 12px;
`;
const MessageTitle = styled(Vertical)`
  flex: 1;
  padding-top: 5px;
`;
const Log = styled.div`
  flex: 1;
  padding-left: 1px;
  background: #fff;
  font-size: 10px;
  line-height: 14px;
`;
const LogLine = styled.p<{ $strong?: boolean }>`
  font-weight: ${p => (p.$strong ? 700 : 400)};
  color: ${p => (p.$strong ? '#000' : '#333')};
`;
const ScrollBar = styled.div`
  width: 16px;
  display: flex;
  flex-direction: column;
  background: #efefef;
`;
const ScrollButton = styled(PlainButton)<{ $on?: boolean }>`
  height: 17px;
  background: ${p => (p.$on ? '#dcdcdc' : 'transparent')};
`;
const Track = styled.div`
  flex: 1;
  display: flex;
  align-items: flex-end;
`;
const Thumb = styled.span`
  width: 100%;
  height: 22px;
  background: #c1c1c1;
`;

const StatusBar = styled.footer`
  height: 19px;
  display: flex;
  align-items: center;
  justify-content: space-between;
  padding-left: 2px;
  border-bottom: 1px solid #222;
  background: #efefef;
  font-size: 11px;
  color: #222;
`;
const StatusCells = styled.div`
  align-self: stretch;
  display: flex;
  align-items: center;
  gap: 12px;
  padding: 0 5px 0 6px;
  border-left: 1px solid #a8a8a8;
`;
const Pointer = styled.div`
  position: absolute;
  left: 234px;
  top: 257px;
  pointer-events: none;
`;

const menus = ['File', 'Tools', 'Geometry', 'Connect', 'Model', 'Mesh', 'Modify', 'List', 'Delete', 'Group', 'View', 'Window', 'Help'];
const log = [
  'Opening Database...',
  'Full OpenGL Hardware Acceleration (Double Buffered)',
  'Your card supports OpenGL 4.6',
  'Performance Graphics is enabled',
];
const strongLog = ['Select an Undeformed View', 'Select a view with no Contours'];

export default function App() {
  return (
    <Frame>
      <GlobalStyle />
      <TitleBar>
        <Icon name="app" size={15} />
        <Title>Femap with NX Nastran - [Double UNP Analysis : Untitled]</Title>
        <WindowButtons>
          <PlainButton aria-label="Minimize"><Icon name="winMin" size={16} /></PlainButton>
          <PlainButton aria-label="Restore"><Icon name="winMax" size={16} /></PlainButton>
          <PlainButton aria-label="Close"><Icon name="winClose" size={16} /></PlainButton>
        </WindowButtons>
      </TitleBar>

      <MenuBar aria-label="Main menu">
        <Grip />
        <MenuItems>{menus.map(m => <MenuItem key={m}>{m}</MenuItem>)}</MenuItems>
        <PlainButton aria-label="Minimize document"><Icon name="mdiMin" size={9} /></PlainButton>
        <PlainButton aria-label="Restore document"><Icon name="mdiMax" size={9} /></PlainButton>
        <PlainButton aria-label="Close document"><Icon name="close" size={9} /></PlainButton>
      </MenuBar>

      <Bands>
        <Band $h={16} $gap={3}>{fileBand.map(g => <ToolGroup key={g.label} {...g} />)}</Band>
        <Band $h={22} $gap={4}>
          {paneBand.map(g => <ToolGroup key={g.label} {...g} />)}
          <Bar $w={173} role="toolbar" aria-label="Custom">
            <Grip />
            <TextCells>
              <TextTool><Icon name="custom" size={11} />Custom Tools</TextTool>
              <TextTool><Icon name="user" size={11} />User Tools</TextTool>
            </TextCells>
            <Overflow aria-label="More" />
          </Bar>
        </Band>
        <Band $h={23} $gap={4}>
          <Bar $w={459} role="toolbar" aria-label="View orientation">
            <Grip />
            <TextCells>
              {viewTools.map(([icon, t]) => <TextTool key={t}><Icon name={icon} size={12} />{t}</TextTool>)}
            </TextCells>
            <Overflow aria-label="More" />
          </Bar>
        </Band>
      </Bands>

      <Work>
        <Rail>
          <RailTab $h={77}><Icon name="columns" size={10} /><Vertical>Data Table</Vertical></RailTab>
          <RailTab $h={65}><Icon name="chart" size={10} /><Vertical>Charting</Vertical></RailTab>
        </Rail>

        <Panel>
          <PanelHead>
            <Grip />
            <PanelTitle>Model Info</PanelTitle>
            <PlainButton aria-label="Auto hide"><Icon name="pin" size={8} /></PlainButton>
            <PlainButton aria-label="Close panel"><Icon name="close" size={8} /></PlainButton>
          </PanelHead>
          <PanelTools>
            {['listGray', 'folderUp'].map(n => <PlainButton key={n} aria-label={n}><Icon name={n} size={12} /></PlainButton>)}
            <Split />
            <PlainButton aria-label="Filter"><Icon name="filter" size={11} /></PlainButton>
            <Split />
            <ToolIcons>
              {['arrowBox', 'tags', 'marker'].map(n => <PlainButton key={n} aria-label={n}><Icon name={n} size={12} /></PlainButton>)}
            </ToolIcons>
            <Drop />
          </PanelTools>
          <TreeView />
          <PanelTabs>
            <PanelTab $on><Icon name="info" size={11} />Model Info</PanelTab>
            <PanelTab><Icon name="mesh" size={11} />Meshing</PanelTab>
            <PanelTab><Icon name="post" size={11} />PostProcessing</PanelTab>
          </PanelTabs>
        </Panel>

        <Right>
          <DocTabs>
            <DocTab $w={116}>Model1 : Untitled</DocTab>
            <DocTab $w={163} $on>Double UNP Analysis :...</DocTab>
            <DocNav>
              <PlainButton aria-label="Previous"><Icon name="triL" size={9} /></PlainButton>
              <PlainButton aria-label="Next"><Icon name="triR" size={9} /></PlainButton>
              <PlainButton aria-label="Close document"><Icon name="close" size={8} /></PlainButton>
            </DocNav>
          </DocTabs>
          <Viewport><Model /></Viewport>
          <Messages>
            <MessageHead>
              <MessageTitle>Messa</MessageTitle>
              <PlainButton aria-label="Auto hide"><Icon name="pinDown" size={8} /></PlainButton>
              <PlainButton aria-label="Close messages"><Icon name="close" size={8} /></PlainButton>
            </MessageHead>
            <Log>
              {log.map(l => <LogLine key={l}>{l}</LogLine>)}
              {strongLog.map(l => <LogLine key={l} $strong>{l}</LogLine>)}
            </Log>
            <ScrollBar>
              <ScrollButton $on aria-label="Scroll up"><Icon name="up" size={10} /></ScrollButton>
              <Track><Thumb /></Track>
              <ScrollButton aria-label="Scroll down"><Icon name="down" size={10} /></ScrollButton>
            </ScrollBar>
          </Messages>
        </Right>
      </Work>

      <StatusBar>
        <span>Ready - Nodes: 21,&nbsp; Elements: 40</span>
        <StatusCells>
          {['Prop: 1', 'Ld: 3', 'Con: 1', 'Grp: 0', 'Out: 1'].map(s => <span key={s}>{s}</span>)}
        </StatusCells>
      </StatusBar>

      <Pointer>
        <svg width="13" height="20" viewBox="0 0 13 20" aria-hidden="true">
          <path d="M1 1v15l4-3 3 6 2-1-3-6h5z" fill="#fff" stroke="#555" />
        </svg>
      </Pointer>
    </Frame>
  );
}
